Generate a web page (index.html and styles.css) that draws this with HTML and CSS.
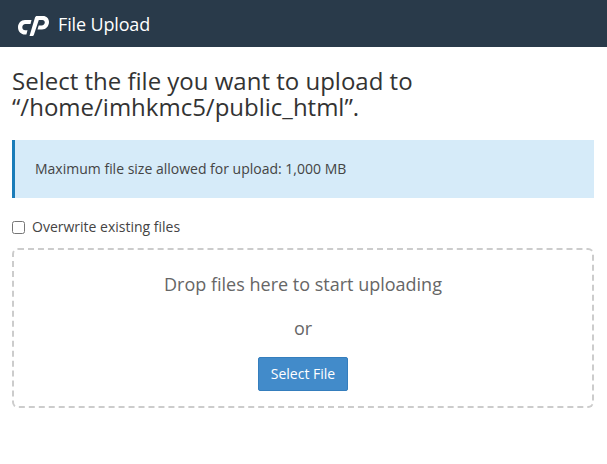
FILE: index.html
```html
<!DOCTYPE html>
<html>
	<head>
		<meta charset="utf-8">
		<title>File Upload</title>
		<link rel="stylesheet" href="styles.css">
	</head>
	<body>
		<div class="top-bar">
			<svg class="logo" width="31" height="20" viewBox="0 0 31 20">
				<path fill="#fff" d="M7 4H13.5L12.5 8H7.5C5.5 8 4.3 9.4 4.3 11.2C4.3 13 5.5 14.3 7.3 14.3H9.5L8.4 18.5H7C3 18.5 0 15.4 0 11.2C0 7.2 3 4 7 4Z"/>
				<path fill="#fff" d="M11.5 20L17 1.5C17.3 .6 18 0 19 0H25C28.5 0 31 2.6 31 6C31 10 28 13.5 24 13.5H19.5L20.7 9.5H23.5C25.5 9.5 26.8 8 26.8 6.3C26.8 5 25.8 4 24.4 4H20.8L16 18.5C15.7 19.5 15 20 14 20Z"/>
			</svg>
			<span class="top-title">File Upload</span>
		</div>
		<div class="content">
			<h1 class="heading">Select the file you want to upload to “/home/imhkmc5/public_html”.</h1>
			<div class="alert">Maximum file size allowed for upload: 1,000 MB</div>
			<label class="overwrite"><input type="checkbox" class="overwrite-box">Overwrite existing files</label>
			<div class="drop-zone">
				<div class="drop-text">Drop files here to start uploading</div>
				<div class="or-text">or</div>
				<button class="select-btn">Select File</button>
			</div>
		</div>
	</body>
</html>
```
FILE: styles.css
```css
*{
	box-sizing: border-box;
}
body{
	margin: 0;
	background-color: #fff;
	color: #333;
	font-family: "Open Sans", "Liberation Sans", sans-serif;
	font-size: 14px;
}
.top-bar{
	display: flex;
	align-items: center;
	height: 47px;
	padding-left: 18px;
	background-color: #293a4a;
}
.logo{
	margin: 5px 9px 0 0;
}
.top-title{
	color: #fff;
	font-size: 18px;
	letter-spacing: -0.15px;
}
.content{
	padding: 21px 13px 0 12px;
}
.heading{
	margin: 0 0 19px;
	font-size: 24px;
	font-weight: 400;
	line-height: 26.4px;
	color: #333;
}
.alert{
	display: flex;
	align-items: center;
	height: 58px;
	padding-left: 20px;
	background-color: #d6ebf9;
	border-left: 3px solid #1a7cb9;
	color: #444;
}
.overwrite{
	display: flex;
	align-items: center;
	height: 20px;
	margin-top: 19px;
	color: #444;
}
.overwrite-box{
	width: 13px;
	height: 13px;
	margin: 1px 7px 0 0;
}
.drop-zone{
	display: flex;
	flex-direction: column;
	align-items: center;
	height: 160px;
	margin-top: 11px;
	padding-top: 22px;
	border: 2px dashed #ccc;
	border-radius: 6px;
	color: #666;
}
.drop-text{
	font-size: 18px;
	line-height: 25px;
}
.or-text{
	margin-top: 19px;
	font-size: 18px;
	line-height: 25px;
}
.select-btn{
	width: 90px;
	height: 34px;
	margin-top: 16px;
	background-color: #428bca;
	border: 1px solid #357ebd;
	border-radius: 2px;
	color: #fff;
	font-family: inherit;
	font-size: 14px;
}
```
